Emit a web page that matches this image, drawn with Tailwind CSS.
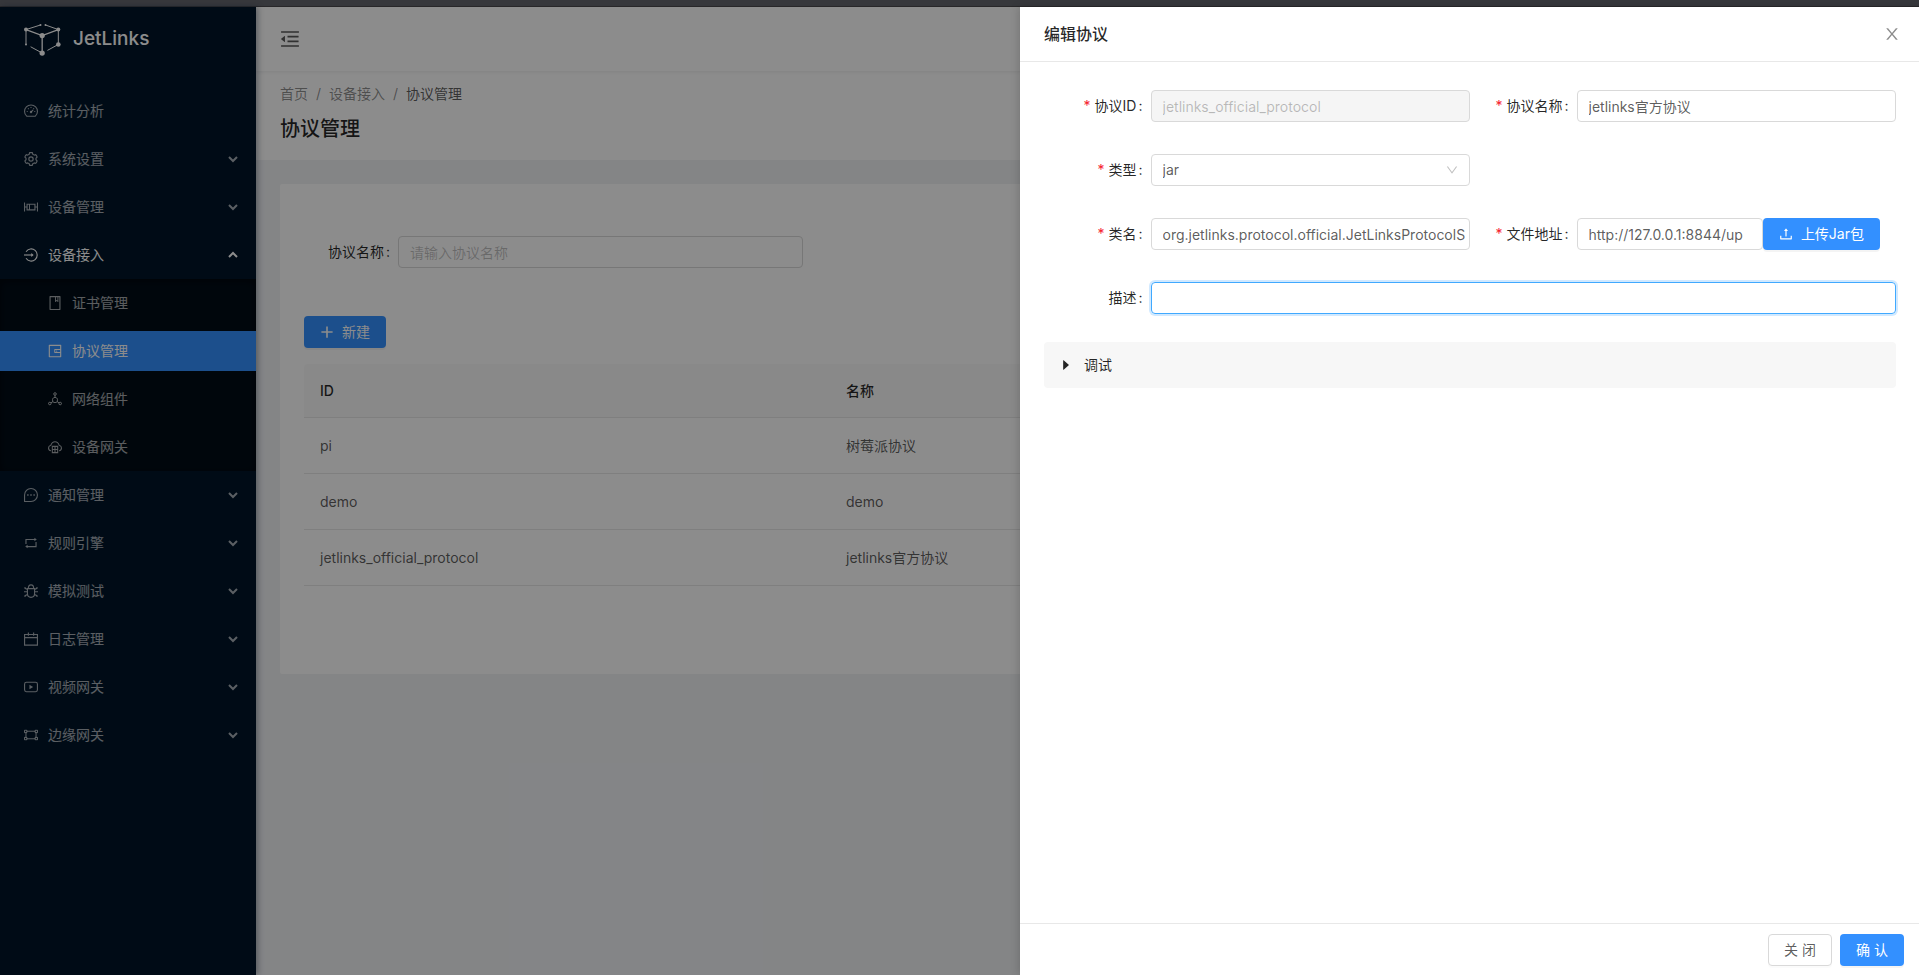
<!DOCTYPE html>
<html lang="zh-CN">
<head>
<meta charset="utf-8">
<title>协议管理 - JetLinks</title>
<script src="https://cdn.jsdelivr.net/npm/@tailwindcss/browser@4"></script>
</head>
<body class="flex h-screen flex-col overflow-hidden bg-[#f0f2f5] font-['Inter','Noto_Sans_CJK_SC',sans-serif] text-sm leading-[22px] text-black/65">
<svg class="hidden" aria-hidden="true">
  <symbol id="down" viewBox="64 64 896 896"><path fill="currentColor" d="M884 256h-75c-5.1 0-9.9 2.5-12.9 6.6L512 654.2 227.9 262.6c-3-4.1-7.8-6.6-12.9-6.6h-75c-6.5 0-10.3 7.4-6.5 12.7l352.6 486.1c12.8 17.6 39 17.6 51.7 0l352.6-486.1c3.9-5.3.1-12.7-6.4-12.7z"/></symbol>
  <symbol id="chevron" viewBox="0 0 10 10"><path fill="none" stroke="currentColor" stroke-width="2" d="M1 3l4 4 4-4"/></symbol>
</svg>

<div class="h-[7px] shrink-0 border-b border-[#29282a] bg-[#37383c]"></div>

<div class="relative flex min-h-0 flex-1">
  <aside class="relative z-10 w-64 shrink-0 bg-[#001529] text-white/65 shadow-[2px_0_6px_rgba(0,21,41,0.35)]">
    <a href="#" class="flex h-16 items-center gap-3 pl-6 text-white">
      <svg class="h-[33px] w-[37px]" viewBox="72 66 112 100" fill="currentColor" stroke="currentColor" aria-hidden="true">
        <g fill="none" stroke-width="3"><path d="M78 86l44-14M137 72l39 14M78 86v45M176 86v45M92 138l35 19M176 131l-33 18"/><path stroke-width="4" d="M78 86l49 18 49-18M127 104v53"/></g>
        <g stroke="none"><circle cx="78" cy="86" r="6"/><circle cx="176" cy="86" r="6"/><circle cx="176" cy="131" r="7"/><circle cx="127" cy="104" r="8"/><circle cx="127" cy="157" r="8"/><circle cx="122" cy="72" r="3"/><circle cx="137" cy="72" r="3"/><circle cx="78" cy="131" r="3"/></g>
      </svg>
      <span class="text-[19px] font-medium">JetLinks</span>
    </a>
    <nav class="pt-4">
      <ul>
        <li><a href="#" class="flex h-12 items-center gap-[10px] pl-6">
          <svg class="size-[14px]" viewBox="64 64 896 896" fill="none" stroke="currentColor" stroke-width="68" aria-hidden="true"><path d="M237 846A412 412 0 1 1 787 846Z"/><circle cx="512" cy="580" r="44"/><path d="M545 545l105-105M512 250v70M240 540h60M724 540h60M320 350l45 45M660 395l45-45"/></svg>
          <span>统计分析</span></a></li>
        <li><a href="#" class="flex h-12 items-center gap-[10px] pl-6 pr-[18px]">
          <svg class="size-[14px]" viewBox="24 24 976 976" fill="none" stroke="currentColor" stroke-width="80" aria-hidden="true"><path d="M924.8 625.7l-65.5-56c3.1-19 4.7-38.4 4.7-57.8s-1.6-38.8-4.7-57.8l65.5-56a32 32 0 0 0 9.3-35.2l-.9-2.6a443.7 443.7 0 0 0-79.7-137.9l-1.8-2.1a32 32 0 0 0-35.1-9.5l-81.3 28.9c-30-24.6-63.5-44-99.7-57.6l-15.7-85a32 32 0 0 0-25.8-25.7l-2.7-.5c-52.1-9.4-106.9-9.4-159 0l-2.7.5a32 32 0 0 0-25.8 25.7l-15.8 85.4a351.9 351.9 0 0 0-99 57.4l-81.9-29.1a32 32 0 0 0-35.1 9.5l-1.8 2.1a446 446 0 0 0-79.7 137.9l-.9 2.6c-4.5 12.5-.8 26.5 9.3 35.2l66.3 56.6c-3.1 18.8-4.6 38-4.6 57.1 0 19.2 1.5 38.4 4.6 57.1L99 625.5a32 32 0 0 0-9.3 35.2l.9 2.6c18.1 50.4 44.9 96.9 79.7 137.9l1.8 2.1a32 32 0 0 0 35.1 9.5l81.9-29.1c29.8 24.5 63.1 43.9 99 57.4l15.8 85.4a32 32 0 0 0 25.8 25.7l2.7.5a449.4 449.4 0 0 0 159 0l2.7-.5a32 32 0 0 0 25.8-25.7l15.7-85a350 350 0 0 0 99.7-57.6l81.3 28.9a32 32 0 0 0 35.1-9.5l1.8-2.1c34.8-41.1 61.6-87.5 79.7-137.9l.9-2.6c4.5-12.3.8-26.3-9.3-35z"/><circle cx="512" cy="512" r="150"/></svg>
          <span class="flex-1">系统设置</span><svg class="size-[10px]" aria-hidden="true"><use href="#chevron"/></svg></a></li>
        <li><a href="#" class="flex h-12 items-center gap-[10px] pl-6 pr-[18px]">
          <svg class="size-[14px]" viewBox="64 64 896 896" fill="currentColor" aria-hidden="true"><path d="M952 224h-52c-4.400 0-8 3.600-8 8v248h-92V304c0-4.400-3.600-8-8-8H232c-4.400 0-8 3.600-8 8v176h-92V232c0-4.400-3.600-8-8-8H72c-4.400 0-8 3.600-8 8v560c0 4.400 3.600 8 8 8h52c4.400 0 8-3.600 8-8V548h92v172c0 4.400 3.600 8 8 8h560c4.400 0 8-3.600 8-8V548h92v244c0 4.400 3.600 8 8 8h52c4.400 0 8-3.600 8-8V232c0-4.400-3.600-8-8-8zM296 368h88v288h-88V368zm432 288H448V368h280v288z"/></svg>
          <span class="flex-1">设备管理</span><svg class="size-[10px]" aria-hidden="true"><use href="#chevron"/></svg></a></li>
        <li>
          <a href="#" class="flex h-12 items-center gap-[10px] pl-6 pr-[18px] text-white">
            <svg class="size-[14px]" viewBox="64 64 896 896" fill="none" stroke="currentColor" stroke-width="72" aria-hidden="true"><path d="M196 300A388 388 0 1 1 196 724"/><path d="M64 512h520"/><path fill="currentColor" stroke="none" d="M530 390l150 122-150 122z"/></svg>
            <span class="flex-1">设备接入</span><svg class="size-[10px] rotate-180" aria-hidden="true"><use href="#chevron"/></svg></a>
          <ul class="bg-[#000c17] shadow-[inset_0_2px_8px_rgba(0,0,0,0.45)]">
            <li class="py-1"><a href="#" class="flex h-10 items-center gap-[10px] pl-12 text-white/65">
              <svg class="size-[14px]" viewBox="64 64 896 896" fill="currentColor" aria-hidden="true"><path d="M832 64H192c-17.700 0-32 14.300-32 32v832c0 17.700 14.300 32 32 32h640c17.700 0 32-14.300 32-32V96c0-17.700-14.300-32-32-32zm-260 72h96v209.900L621.500 312 572 347.400V136zm220 752H232V136h280v296.900c0 3.300 1 6.600 3 9.300a15.900 15.900 0 0 0 22.300 3.700l83.800-59.900 81.400 59.400c2.700 2 6 3.100 9.400 3.100 8.800 0 16-7.200 16-16V136h64v752z"/></svg>
              <span>证书管理</span></a></li>
            <li class="py-1"><a href="#" aria-current="page" class="flex h-10 items-center gap-[10px] bg-[#3390ff] pl-12 text-white">
              <svg class="size-[14px]" viewBox="64 64 896 896" fill="currentColor" aria-hidden="true"><path d="M880 112H144c-17.700 0-32 14.300-32 32v736c0 17.700 14.300 32 32 32h736c17.700 0 32-14.300 32-32V144c0-17.700-14.300-32-32-32zm-40 464H528V448h312v128zm0 264H184V184h656v200H496c-17.700 0-32 14.300-32 32v192c0 17.700 14.300 32 32 32h344v200zM580 512a40 40 0 1 0 80 0 40 40 0 1 0-80 0z"/></svg>
              <span>协议管理</span></a></li>
            <li class="py-1"><a href="#" class="flex h-10 items-center gap-[10px] pl-12 text-white/65">
              <svg class="size-[14px]" viewBox="64 64 896 896" fill="none" stroke="currentColor" stroke-width="64" aria-hidden="true"><circle cx="512" cy="190" r="82"/><circle cx="180" cy="800" r="82"/><circle cx="844" cy="800" r="82"/><path d="M512 272v140M250 760l120-70M774 760l-120-70M512 412c90 0 150 50 158 130l-16 148c-90 70-194 70-284 0l-16-148c8-80 68-130 158-130z"/></svg>
              <span>网络组件</span></a></li>
            <li class="py-1"><a href="#" class="flex h-10 items-center gap-[10px] pl-12 text-white/65">
              <svg class="size-[14px]" viewBox="64 64 896 896" fill="none" stroke="currentColor" stroke-width="68" aria-hidden="true"><path d="M250 750C150 740 98 660 98 580c0-90 60-155 145-175C290 270 390 180 512 180s222 90 269 225c85 20 145 85 145 175 0 80-52 160-152 170"/><path d="M340 470h344v400H340zM340 670h344M512 470v400"/></svg>
              <span>设备网关</span></a></li>
          </ul>
        </li>
        <li><a href="#" class="flex h-12 items-center gap-[10px] pl-6 pr-[18px]">
          <svg class="size-[14px]" viewBox="64 64 896 896" fill="none" stroke="currentColor" stroke-width="70" aria-hidden="true"><path d="M100 924V512A412 412 0 1 1 512 924Z" stroke-linejoin="round"/><path stroke-width="90" d="M267 512h90M467 512h90M667 512h90"/></svg>
          <span class="flex-1">通知管理</span><svg class="size-[10px]" aria-hidden="true"><use href="#chevron"/></svg></a></li>
        <li><a href="#" class="flex h-12 items-center gap-[10px] pl-6 pr-[18px]">
          <svg class="size-[14px]" viewBox="64 64 896 896" fill="none" stroke="currentColor" stroke-width="72" aria-hidden="true"><path d="M190 580V284h560M834 444v296H274"/><path fill="currentColor" stroke="none" d="M730 170l150 114-150 114zM294 626L144 740l150 114z"/></svg>
          <span class="flex-1">规则引擎</span><svg class="size-[10px]" aria-hidden="true"><use href="#chevron"/></svg></a></li>
        <li><a href="#" class="flex h-12 items-center gap-[10px] pl-6 pr-[18px]">
          <svg class="size-[14px]" viewBox="64 64 896 896" fill="none" stroke="currentColor" stroke-width="72" aria-hidden="true"><path d="M284 356h456v320c0 140-100 240-228 240S284 816 284 676zM340 356c0-150 70-240 172-240s172 90 172 240M64 560h220M740 560h220M130 260v80l154 70M894 260v80l-154 70M130 890v-80l154-80M894 890v-80l-154-80"/></svg>
          <span class="flex-1">模拟测试</span><svg class="size-[10px]" aria-hidden="true"><use href="#chevron"/></svg></a></li>
        <li><a href="#" class="flex h-12 items-center gap-[10px] pl-6 pr-[18px]">
          <svg class="size-[14px]" viewBox="64 64 896 896" fill="none" stroke="currentColor" stroke-width="72" aria-hidden="true"><path d="M100 220h824v680H100zM100 426h824M344 100v204M680 100v204"/></svg>
          <span class="flex-1">日志管理</span><svg class="size-[10px]" aria-hidden="true"><use href="#chevron"/></svg></a></li>
        <li><a href="#" class="flex h-12 items-center gap-[10px] pl-6 pr-[18px]">
          <svg class="size-[14px]" viewBox="64 64 896 896" fill="none" stroke="currentColor" stroke-width="72" aria-hidden="true"><rect x="100" y="210" width="824" height="604" rx="120"/><path fill="currentColor" stroke="none" d="M410 370l240 142-240 142z"/></svg>
          <span class="flex-1">视频网关</span><svg class="size-[10px]" aria-hidden="true"><use href="#chevron"/></svg></a></li>
        <li><a href="#" class="flex h-12 items-center gap-[10px] pl-6 pr-[18px]">
          <svg class="size-[14px]" viewBox="64 64 896 896" fill="none" stroke="currentColor" stroke-width="64" aria-hidden="true"><path d="M96 210h150v150H96zM778 210h150v150H778zM96 664h150v150H96zM778 664h150v150H778zM246 270h532M246 754h532M190 360v304M834 360v304"/></svg>
          <span class="flex-1">边缘网关</span><svg class="size-[10px]" aria-hidden="true"><use href="#chevron"/></svg></a></li>
      </ul>
    </nav>
  </aside>

  <div class="min-w-0 flex-1">
    <header class="relative flex h-16 items-center bg-white pl-6 shadow-[0_1px_4px_rgba(0,21,41,0.08)]">
      <button type="button" aria-label="收起菜单">
        <svg class="size-5" viewBox="64 64 896 896" fill="currentColor" aria-hidden="true"><path d="M408 442h480c4.400 0 8-3.600 8-8v-56c0-4.400-3.600-8-8-8H408c-4.400 0-8 3.600-8 8v56c0 4.400 3.600 8 8 8zm-8 204c0 4.400 3.600 8 8 8h480c4.400 0 8-3.600 8-8v-56c0-4.400-3.600-8-8-8H408c-4.400 0-8 3.600-8 8v56zm504-486H120c-4.400 0-8 3.600-8 8v56c0 4.400 3.600 8 8 8h784c4.400 0 8-3.600 8-8v-56c0-4.400-3.600-8-8-8zm0 632H120c-4.400 0-8 3.600-8 8v56c0 4.400 3.600 8 8 8h784c4.400 0 8-3.600 8-8v-56c0-4.400-3.600-8-8-8zM115.400 518.900L271.700 642c5.800 4.600 14.400.5 14.400-6.900V388.900c0-7.400-8.500-11.500-14.400-6.900L115.400 505.100a8.740 8.740 0 0 0 0 13.800z"/></svg>
      </button>
    </header>
    <div class="bg-white px-6 pt-3 pb-[15px]">
      <nav aria-label="面包屑" class="flex gap-2 text-black/45">
        <a href="#">首页</a><span>/</span><a href="#">设备接入</a><span>/</span><span class="text-black/65">协议管理</span>
      </nav>
      <h1 class="mt-2 text-xl leading-8 font-medium text-black/85">协议管理</h1>
    </div>

    <main class="m-6 rounded-xs bg-white px-6 pt-12 pb-[88px]">
      <form class="mb-11 flex h-10 items-center px-6">
        <label for="q" class="w-[70px] text-black/85">协议名称<span class="ml-0.5">:</span></label>
        <input id="q" type="text" placeholder="请输入协议名称" class="h-8 w-[405px] rounded border border-[#d9d9d9] px-[11px] placeholder:text-black/25">
      </form>
      <button type="button" class="mb-4 flex h-8 items-center gap-2 rounded bg-[#3390ff] px-4 text-white shadow-[0_2px_0_rgba(0,0,0,0.045)]">
        <svg class="size-[14px]" viewBox="64 64 896 896" fill="currentColor" aria-hidden="true"><path d="M460 152h104v308h308v104H564v308H460V564H152V460h308z"/></svg>新建
      </button>
      <table class="w-full table-fixed border-separate border-spacing-0 text-left">
        <thead>
          <tr class="h-[54px] bg-[#fafafa] text-black/85">
            <th class="w-[526px] rounded-tl border-b border-[#e8e8e8] px-4 font-medium">ID</th>
            <th class="rounded-tr border-b border-[#e8e8e8] px-4 font-medium">名称</th>
          </tr>
        </thead>
        <tbody>
          <tr class="h-14"><td class="border-b border-[#e8e8e8] px-4">pi</td><td class="border-b border-[#e8e8e8] px-4">树莓派协议</td></tr>
          <tr class="h-14"><td class="border-b border-[#e8e8e8] px-4">demo</td><td class="border-b border-[#e8e8e8] px-4">demo</td></tr>
          <tr class="h-14"><td class="border-b border-[#e8e8e8] px-4">jetlinks_official_protocol</td><td class="border-b border-[#e8e8e8] px-4">jetlinks官方协议</td></tr>
        </tbody>
      </table>
    </main>
  </div>

  <div class="absolute inset-0 z-20 bg-black/45"></div>

  <section role="dialog" aria-labelledby="drawer-title" class="absolute inset-y-0 right-0 z-30 flex w-[899px] flex-col bg-white shadow-[-2px_0_8px_rgba(0,0,0,0.15)]">
    <header class="flex h-[55px] items-center justify-between border-b border-[#e8e8e8] pr-[19px] pl-6">
      <h2 id="drawer-title" class="text-base font-medium text-black/85">编辑协议</h2>
      <button type="button" aria-label="关闭" class="text-black/45">
        <svg class="size-4" viewBox="64 64 896 896" fill="currentColor" aria-hidden="true"><path d="M563.800 512l262.500-312.900c4.400-5.200.7-13.100-6.100-13.100h-79.800c-4.700 0-9.200 2.100-12.300 5.700L511.600 449.800 295.100 191.700c-3-3.600-7.500-5.700-12.300-5.700H203c-6.800 0-10.500 7.900-6.100 13.100L459.400 512 196.900 824.900A7.950 7.950 0 0 0 203 838h79.800c4.700 0 9.200-2.100 12.300-5.700l216.500-258.100 216.500 258.100c3 3.600 7.500 5.700 12.300 5.700h79.800c6.800 0 10.500-7.900 6.100-13.100L563.800 512z"/></svg>
      </button>
    </header>

    <form class="flex min-h-0 flex-1 flex-col">
      <div class="flex-1 pt-6 pr-[23px] pl-6">
        <div class="grid grid-cols-[1fr_3fr_1fr_3fr] gap-y-6">
          <label for="pid" class="flex h-10 items-center justify-end pr-2 text-black/85"><span class="mr-1 text-[#f5222d]">*</span>协议ID<span class="ml-0.5">:</span></label>
          <div class="flex h-10 min-w-0 items-center"><input id="pid" type="text" disabled value="jetlinks_official_protocol" class="h-8 w-full rounded border border-[#d9d9d9] bg-[#f5f5f5] px-[11px] text-black/25"></div>
          <label for="pname" class="flex h-10 items-center justify-end pr-2 text-black/85"><span class="mr-1 text-[#f5222d]">*</span>协议名称<span class="ml-0.5">:</span></label>
          <div class="flex h-10 min-w-0 items-center"><input id="pname" type="text" value="jetlinks官方协议" class="h-8 w-full rounded border border-[#d9d9d9] px-[11px]"></div>

          <label for="ptype" class="flex h-10 items-center justify-end pr-2 text-black/85"><span class="mr-1 text-[#f5222d]">*</span>类型<span class="ml-0.5">:</span></label>
          <div class="relative flex h-10 min-w-0 items-center">
            <select id="ptype" class="h-8 w-full appearance-none rounded border border-[#d9d9d9] px-[11px]"><option>jar</option></select>
            <svg class="pointer-events-none absolute right-3 size-3 text-black/25" aria-hidden="true"><use href="#down"/></svg>
          </div>

          <label for="pclass" class="col-start-1 flex h-10 items-center justify-end pr-2 text-black/85"><span class="mr-1 text-[#f5222d]">*</span>类名<span class="ml-0.5">:</span></label>
          <div class="flex h-10 min-w-0 items-center"><input id="pclass" type="text" value="org.jetlinks.protocol.official.JetLinksProtocolS" class="h-8 w-full rounded border border-[#d9d9d9] pr-1 pl-[11px]"></div>
          <label for="pfile" class="flex h-10 items-center justify-end pr-2 text-black/85"><span class="mr-1 text-[#f5222d]">*</span>文件地址<span class="ml-0.5">:</span></label>
          <div class="flex h-10 min-w-0 items-center pr-4">
            <input id="pfile" type="text" value="http://127.0.0.1:8844/up" class="h-8 min-w-0 flex-1 rounded border border-[#d9d9d9] px-[11px]">
            <button type="button" class="flex h-8 items-center gap-2 rounded bg-[#3390ff] px-4 text-white shadow-[0_2px_0_rgba(0,0,0,0.045)]">
              <svg class="size-[14px]" viewBox="64 64 896 896" fill="currentColor" aria-hidden="true"><path d="M400 317.700h73.900V656c0 4.400 3.600 8 8 8h60c4.400 0 8-3.600 8-8V317.700H624c6.700 0 10.400-7.700 6.300-12.900L518.300 163a8 8 0 0 0-12.600 0l-112 141.700c-4.100 5.300-.4 13 6.300 13zM878 626h-60c-4.400 0-8 3.600-8 8v154H214V634c0-4.400-3.600-8-8-8h-60c-4.400 0-8 3.600-8 8v198c0 17.700 14.300 32 32 32h684c17.700 0 32-14.300 32-32V634c0-4.400-3.600-8-8-8z"/></svg>上传Jar包
            </button>
          </div>

          <label for="pdesc" class="flex h-10 items-center justify-end pr-2 text-black/85">描述<span class="ml-0.5">:</span></label>
          <div class="col-span-3 flex h-10 items-center"><input id="pdesc" type="text" class="h-8 w-full rounded border border-[#40a9ff] px-[11px] shadow-[0_0_0_2px_rgba(24,144,255,0.2)] outline-none"></div>
        </div>

        <button type="button" aria-expanded="false" class="mt-6 flex h-[46px] w-full items-center gap-3 rounded bg-[#f7f7f7] pl-4 text-left text-black/85">
          <svg class="size-3" viewBox="64 64 896 896" fill="currentColor" aria-hidden="true"><path d="M715.800 493.500L335 165.100c-14.200-12.200-35-1.200-35 18.500v656.800c0 19.700 20.800 30.700 35 18.500l380.800-328.400c10.900-9.400 10.900-27.600 0-37z"/></svg>调试
        </button>
      </div>

      <footer class="flex justify-end gap-2 border-t border-[#e8e8e8] pt-[10px] pr-[15px] pb-[9px]">
        <button type="button" class="h-8 w-16 rounded border border-[#d9d9d9] bg-white shadow-[0_2px_0_rgba(0,0,0,0.016)]">关 闭</button>
        <button type="submit" class="h-8 w-16 rounded bg-[#3390ff] text-white shadow-[0_2px_0_rgba(0,0,0,0.045)]">确 认</button>
      </footer>
    </form>
  </section>
</div>
</body>
</html>
